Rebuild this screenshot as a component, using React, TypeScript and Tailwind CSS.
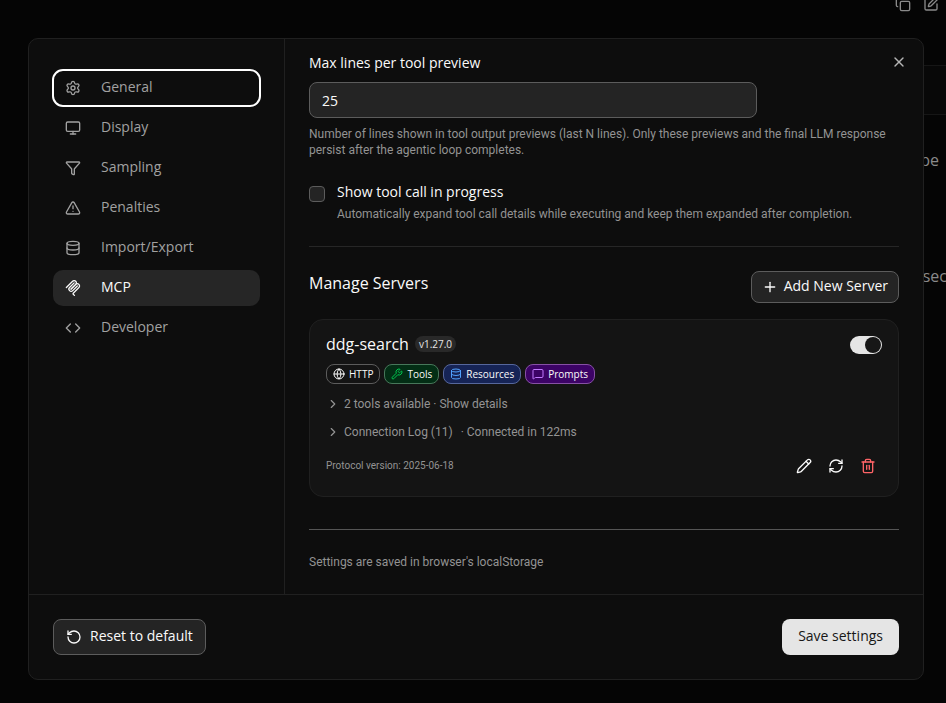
import React, { useState } from "react";
import {
  ChevronRight,
  Code,
  Copy,
  Database,
  Funnel,
  Globe,
  MessageSquare,
  Monitor,
  Pencil,
  Plus,
  RefreshCw,
  RotateCcw,
  Settings,
  SquarePen,
  Trash2,
  TriangleAlert,
  Wrench,
  X,
} from "lucide-react";

const McpLogo = ({ className }: { className?: string }) => (
  <svg
    viewBox="0 0 174 174"
    fill="none"
    stroke="currentColor"
    strokeWidth="14"
    strokeLinecap="round"
    className={className}
    aria-hidden="true"
  >
    <path d="M15 81.8528L82.8822 13.9706C92.2548 4.59798 107.451 4.59798 116.823 13.9706C126.196 23.3431 126.196 38.5391 116.823 47.9117L65.5581 99.177" />
    <path d="M66.2652 98.47L116.823 47.9117C126.196 38.5391 141.392 38.5391 150.765 47.9117L151.118 48.2652C160.491 57.6378 160.491 72.8338 151.118 82.2063L89.7248 143.6C86.6006 146.724 86.6006 151.789 89.7248 154.913L102.331 167.52" />
    <path d="M99.853 30.9411L49.6482 81.1457C40.2756 90.5183 40.2756 105.714 49.6482 115.087C59.0208 124.459 74.2167 124.459 83.5893 115.087L133.794 64.8822" />
  </svg>
);

const sections = [
  { name: "General", icon: Settings },
  { name: "Display", icon: Monitor },
  { name: "Sampling", icon: Funnel },
  { name: "Penalties", icon: TriangleAlert },
  { name: "Import/Export", icon: Database },
  { name: "MCP", icon: McpLogo },
  { name: "Developer", icon: Code },
];

const capabilities = [
  { name: "HTTP", icon: Globe, box: "border-[#5c5c5c]", color: "text-[#fafafa]" },
  { name: "Tools", icon: Wrench, box: "border-[#47775a] bg-[#032e15]", color: "text-[#00c950]" },
  { name: "Resources", icon: Database, box: "border-[#56679c] bg-[#162456]", color: "text-[#51a2ff]" },
  { name: "Prompts", icon: MessageSquare, box: "border-[#8650a4] bg-[#3c0366]", color: "text-[#c27aff]" },
];

const small = "font-['Roboto',sans-serif] text-xs leading-4 text-[#939393]";

/* ================= SERVER CARD ================= */
const ServerCard: React.FC = () => {
  const [enabled, setEnabled] = useState(true);

  return (
    <div className="mt-4 rounded-[14px] border border-[#202020] bg-[#141414] p-4">
      <div className="flex items-start justify-between">
        <div className="flex items-center gap-1.5">
          <h4 className="text-base leading-4 font-medium">ddg-search</h4>
          <span className="rounded-full bg-[#292929] px-1 text-[10px] leading-4 font-medium text-[#e5e5e5]">
            v1.27.0
          </span>
        </div>
        <label className="relative flex h-[18px] w-8 cursor-pointer">
          <input
            type="checkbox"
            role="switch"
            aria-label="Enable ddg-search"
            checked={enabled}
            onChange={(e) => setEnabled(e.target.checked)}
            className="peer h-[18px] w-8 cursor-pointer appearance-none rounded-full bg-[#3a3a3a] checked:bg-[#e5e5e5]"
          />
          <span className="pointer-events-none absolute top-px left-px size-4 rounded-full bg-[#171717] peer-checked:left-[15px]" />
        </label>
      </div>

      <div className="mt-2.5 flex flex-wrap gap-1">
        {capabilities.map(({ name, icon: Icon, box, color }) => (
          <span
            key={name}
            className={`flex h-5 items-center gap-1 rounded-lg border px-1.5 text-[10px] font-medium ${box}`}
          >
            <Icon className={`size-3 ${color}`} />
            {name}
          </span>
        ))}
      </div>

      <button className={`mt-3 flex items-center gap-1 ${small}`}>
        <ChevronRight className="size-3.5 shrink-0" />
        2 tools available · Show details
      </button>
      <button className={`mt-3 flex items-center gap-1 ${small}`}>
        <ChevronRight className="size-3.5 shrink-0" />
        Connection Log (11)
        <span className="pl-1">· Connected in 122ms</span>
      </button>

      <div className="mt-3 flex items-center justify-between">
        <span className="font-['Roboto',sans-serif] text-[10px] text-[#939393]">
          Protocol version: 2025-06-18
        </span>
        <div className="flex gap-1">
          <button aria-label="Edit" className="flex size-7 items-center justify-center">
            <Pencil className="size-4" />
          </button>
          <button aria-label="Refresh" className="flex size-7 items-center justify-center">
            <RefreshCw className="size-4" />
          </button>
          <button aria-label="Delete" className="flex size-7 items-center justify-center text-[#ff6467]">
            <Trash2 className="size-4" />
          </button>
        </div>
      </div>
    </div>
  );
};

/* ================= CHAT BEHIND THE DIALOG ================= */
const Backdrop: React.FC = () => (
  <div className="flex min-h-screen flex-col overflow-hidden text-right text-base text-[#8a8a8a]">
    <div className="-mt-1 flex justify-end gap-3 pr-[7px]">
      <button aria-label="Copy">
        <Copy className="size-4" />
      </button>
      <button aria-label="Edit message">
        <SquarePen className="size-4" />
      </button>
    </div>
    <div className="mt-[53px] ml-auto h-[50px] w-1/2 border-y border-[#161616] bg-[#080808]" />
    <p className="mt-[33px] pr-[7px]">be</p>
    <p className="mt-[92px] -mr-px">sec</p>
  </div>
);

const App: React.FC = () => {
  const [active, setActive] = useState("MCP");
  const [maxLines, setMaxLines] = useState("25");
  const [showProgress, setShowProgress] = useState(false);

  return (
    <div className="relative min-h-screen bg-[#050505] font-['Open_Sans',sans-serif] text-sm text-[#fafafa]">
      <Backdrop />

      <div className="absolute inset-0 flex items-start justify-center pt-[38px] pl-1.5">
        <div
          role="dialog"
          aria-label="Settings"
          className="relative w-full max-w-4xl rounded-[10px] border border-[#202020] bg-[#0d0d0d]"
        >
          <button aria-label="Close" className="absolute top-[15px] right-4 text-[#b5b5b5]">
            <X className="size-4" />
          </button>

          <div className="flex">
            {/* ===== SECTIONS ===== */}
            <nav className="flex w-64 shrink-0 flex-col gap-1 border-r border-[#202020] px-6 pt-[31px]">
              {sections.map(({ name, icon: Icon }) => (
                <button
                  key={name}
                  onClick={() => setActive(name)}
                  className={`flex h-9 items-center gap-5 rounded-[10px] px-3 ${
                    active === name ? "bg-[#262626] text-[#fafafa]" : "text-[#a1a1a1]"
                  } ${name === "General" ? "outline-2 -outline-offset-1 outline-white" : ""}`}
                >
                  <Icon className="size-4 shrink-0" />
                  <span className="pb-0.5">{name}</span>
                </button>
              ))}
            </nav>

            {/* ===== MCP SETTINGS ===== */}
            <div className="min-w-0 flex-1 px-6 pt-3.5 pb-6">
              <label htmlFor="max-lines" className="block leading-5 font-medium">
                Max lines per tool preview
              </label>
              <input
                id="max-lines"
                type="text"
                value={maxLines}
                onChange={(e) => setMaxLines(e.target.value)}
                className="mt-[9px] block h-9 w-full max-w-md rounded-lg border border-[#5c5c5c] bg-[#242424] px-3"
              />
              <p className={`mt-2 ${small}`}>
                Number of lines shown in tool output previews (last N lines). Only these previews and
                the final LLM response persist after the agentic loop completes.
              </p>

              <div className="mt-6 flex items-start gap-3">
                <input
                  id="show-progress"
                  type="checkbox"
                  checked={showProgress}
                  onChange={(e) => setShowProgress(e.target.checked)}
                  className="mt-1 size-4 shrink-0 appearance-none rounded border border-[#5c5c5c] bg-[#242424] checked:bg-[#e5e5e5]"
                />
                <div>
                  <label htmlFor="show-progress" className="block leading-5 font-medium">
                    Show tool call in progress
                  </label>
                  <p className={`mt-1 ${small}`}>
                    Automatically expand tool call details while executing and keep them expanded
                    after completion.
                  </p>
                </div>
              </div>

              <div className="mt-6 flex items-start justify-between border-t border-[#262626] pt-6">
                <h3 className="text-base leading-6 font-medium">Manage Servers</h3>
                <button className="flex h-8 items-center gap-1.5 rounded-lg border border-[#5c5c5c] bg-[#242424] px-2.5 font-medium">
                  <Plus className="size-4" />
                  <span className="pb-0.5">Add New Server</span>
                </button>
              </div>

              <ServerCard />

              <div className="mt-8 border-t border-[#555555] pt-6">
                <p className={small}>Settings are saved in browser's localStorage</p>
              </div>
            </div>
          </div>

          {/* ===== FOOTER ===== */}
          <div className="flex justify-between border-t border-[#202020] p-6">
            <button className="flex h-9 items-center gap-2 rounded-lg border border-[#5c5c5c] bg-[#242424] px-3 font-medium">
              <RotateCcw className="size-4" />
              <span className="pb-0.5">Reset to default</span>
            </button>
            <button className="h-9 rounded-lg bg-[#e5e5e5] px-4 pb-0.5 font-medium text-[#171717]">
              Save settings
            </button>
          </div>
        </div>
      </div>
    </div>
  );
};

export default App;
